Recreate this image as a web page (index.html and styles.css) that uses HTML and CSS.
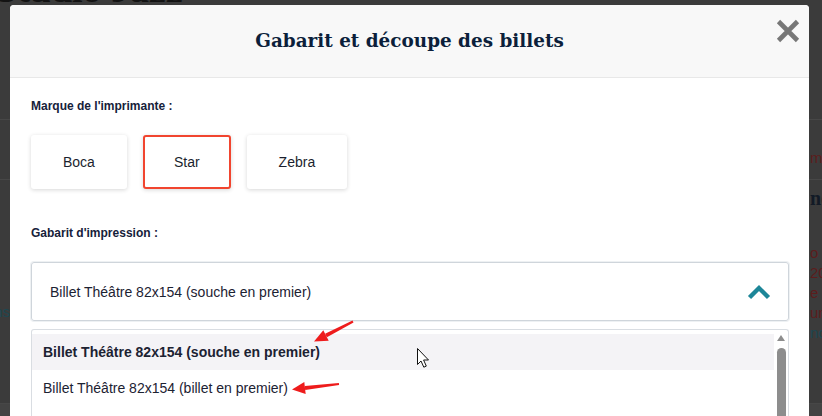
FILE: index.html
```html
<!DOCTYPE html>
<html lang="fr">
<head>
<meta charset="utf-8">
<title>Gabarit et découpe des billets</title>
<link rel="stylesheet" href="styles.css">
</head>
<body>
  <div class="page">
    <div class="page-head">
      <h1 class="page-title">Studio Jazz</h1>
    </div>
    <div class="page-sect sect-a">
      <div class="col-l"></div>
      <div class="col-r"><span class="t-red">ma</span></div>
    </div>
    <div class="page-sect sect-b">
      <div class="col-l">
        <div class="lines">
          <div class="t-red">Vendredi</div>
          <div class="t-red">Quartier</div>
          <div class="t-red">Ouvert à</div>
          <div class="t-teal">Informations</div>
        </div>
      </div>
      <div class="col-r">
        <div class="t-bold">nous</div>
        <div class="lines">
          <div class="t-red">o b</div>
          <div class="t-red">20</div>
          <div class="t-red">e 2</div>
          <div class="t-red">une</div>
          <div class="t-teal">nc</div>
        </div>
      </div>
    </div>
    <div class="page-foot"></div>
  </div>

  <div class="modal">
    <div class="modal-header">
      <h2 class="modal-title">Gabarit et découpe des billets</h2>
      <svg class="close" viewBox="0 0 24 24" width="24" height="24">
        <path d="M2.5 2.5 L21.5 21.5 M21.5 2.5 L2.5 21.5" stroke="#777" stroke-width="4.6" fill="none"/>
      </svg>
    </div>
    <div class="modal-body">
      <p class="field-label">Marque de l'imprimante :</p>
      <div class="brands">
        <div class="brand">Boca</div>
        <div class="brand selected">Star</div>
        <div class="brand">Zebra</div>
      </div>
      <p class="field-label">Gabarit d'impression :</p>
      <div class="select">
        <span>Billet Théâtre 82x154 (souche en premier)</span>
        <svg class="chevron" viewBox="0 0 24 16" width="24" height="16">
          <path d="M2.5 13.5 L12 4 L21.5 13.5" stroke="#1d8698" stroke-width="4.4" fill="none"/>
        </svg>
      </div>
      <div class="dropdown">
        <div class="options">
          <div class="option active">Billet Théâtre 82x154 (souche en premier)</div>
          <div class="option">Billet Théâtre 82x154 (billet en premier)</div>
        </div>
        <div class="scrollbar">
          <div class="scroll-up"></div>
          <div class="scroll-thumb"></div>
        </div>
      </div>
    </div>
  </div>

  <svg class="annotations" viewBox="0 0 822 416" width="822" height="416">
    <polygon points="353.5,322.4 352.5,320.6 325.1,333.7 326.9,337.3" fill="#ee1c1c"/>
    <polygon points="314,341.5 328.7,340.8 323.3,330.2" fill="#ee1c1c"/>
    <polygon points="339.1,385 338.9,383 304.8,386 305.2,390" fill="#ee1c1c"/>
    <polygon points="292,389.5 305.7,394 304.3,382" fill="#ee1c1c"/>
    <path d="M417.5 348.5 L417.5 364.5 L421 361 L423.8 367.2 L426.3 366.1 L423.6 360 L428.5 360 Z" fill="#fff" stroke="#111" stroke-width="1" stroke-linejoin="miter"/>
  </svg>
</body>
</html>
```

FILE: styles.css
```css
html, body {
  margin: 0;
  padding: 0;
}

body {
  width: 822px;
  height: 416px;
  overflow: hidden;
  position: relative;
  background: #3b3b3b;
  font-family: "Liberation Sans", Arial, sans-serif;
}

/* ---------- background page (dimmed by overlay) ---------- */
.page {
  display: flex;
  flex-direction: column;
  height: 416px;
}

.page-head {
  height: 119px;
  border-bottom: 1px solid #474747;
  overflow: hidden;
}

.page-title {
  margin: -31px 0 0 -4px;
  font: bold 38px/40px "Liberation Serif", serif;
  color: #131313;
  white-space: nowrap;
}

.page-sect {
  display: flex;
  justify-content: space-between;
  border-bottom: 1px solid #474747;
}

.sect-a {
  height: 59px;
}

.sect-b {
  flex: 1;
}

.col-l {
  width: 10px;
  overflow: hidden;
  display: flex;
  justify-content: flex-end;
  white-space: nowrap;
}

.col-r {
  width: 12px;
  overflow: hidden;
  white-space: nowrap;
}

.sect-a .col-r {
  padding-top: 28px;
}

.t-red,
.t-teal {
  font-size: 15px;
  line-height: 20px;
  color: #5c1d1d;
}

.t-teal {
  color: #1d4751;
}

.t-bold {
  margin-top: 7px;
  font: bold 20px/22px "Liberation Serif", serif;
  color: #121a26;
}

.lines {
  padding-top: 62px;
}

.col-r .lines {
  padding-top: 34px;
}

.page-foot {
  height: 12px;
  background: #434343;
}

/* ---------- modal ---------- */
.modal {
  position: absolute;
  left: 10px;
  top: 5px;
  width: 799px;
  bottom: 0;
  background: #fff;
  border-radius: 4px 4px 0 0;
  overflow: hidden;
}

.modal-header {
  position: relative;
  height: 72px;
  background: #f8f8f8;
  border-bottom: 1px solid #e8e8e8;
  display: flex;
  align-items: center;
  justify-content: center;
}

.modal-title {
  margin: 0;
  font: bold 18.4px/26px "DejaVu Serif", serif;
  color: #0c1f3b;
}

.close {
  position: absolute;
  right: 9px;
  top: 14px;
}

.modal-body {
  padding: 21px 20px 0 21px;
}

.field-label {
  margin: 0 0 22px;
  font-size: 12px;
  line-height: 14px;
  font-weight: bold;
  color: #16213a;
}

.brands {
  display: flex;
  gap: 16px;
  margin-bottom: 37px;
}

.brand {
  height: 54px;
  box-sizing: border-box;
  padding: 0 32px;
  display: flex;
  align-items: center;
  justify-content: center;
  background: #fff;
  border-radius: 3px;
  box-shadow: 0 1px 4px rgba(0, 0, 0, 0.16);
  font-size: 14px;
  color: #1b1f2e;
}

.brand.selected {
  border: 2px solid #f1452f;
  padding: 0 29px;
}

.select {
  height: 59px;
  box-sizing: border-box;
  border: 1px solid #cfd5db;
  border-radius: 3px;
  box-shadow: 0 0 0 1px #eef1f3;
  display: flex;
  align-items: center;
  justify-content: space-between;
  padding: 0 17px 0 18px;
  font-size: 14px;
  color: #1c2232;
}

.chevron {
  display: block;
}

.dropdown {
  margin-top: 8px;
  height: 120px;
  border: 1px solid #d9dde2;
  border-bottom: none;
  border-radius: 3px 3px 0 0;
  padding-top: 4px;
  display: flex;
}

.options {
  flex: 1;
}

.option {
  height: 36px;
  display: flex;
  align-items: center;
  padding-left: 11px;
  font-size: 14px;
  color: #1c2232;
}

.option.active {
  background: #f4f3f6;
  font-weight: bold;
}

.scrollbar {
  width: 14px;
  display: flex;
  flex-direction: column;
  align-items: center;
  padding-top: 1px;
}

.scroll-up {
  width: 0;
  height: 0;
  border-left: 4.5px solid transparent;
  border-right: 4.5px solid transparent;
  border-bottom: 6px solid #8d8d8d;
}

.scroll-thumb {
  margin-top: 7px;
  width: 9px;
  flex: 1;
  background: #8d8d8d;
  border-radius: 4.5px 4.5px 0 0;
}

/* ---------- annotations over the screenshot ---------- */
.annotations {
  position: absolute;
  left: 0;
  top: 0;
  pointer-events: none;
}
```
